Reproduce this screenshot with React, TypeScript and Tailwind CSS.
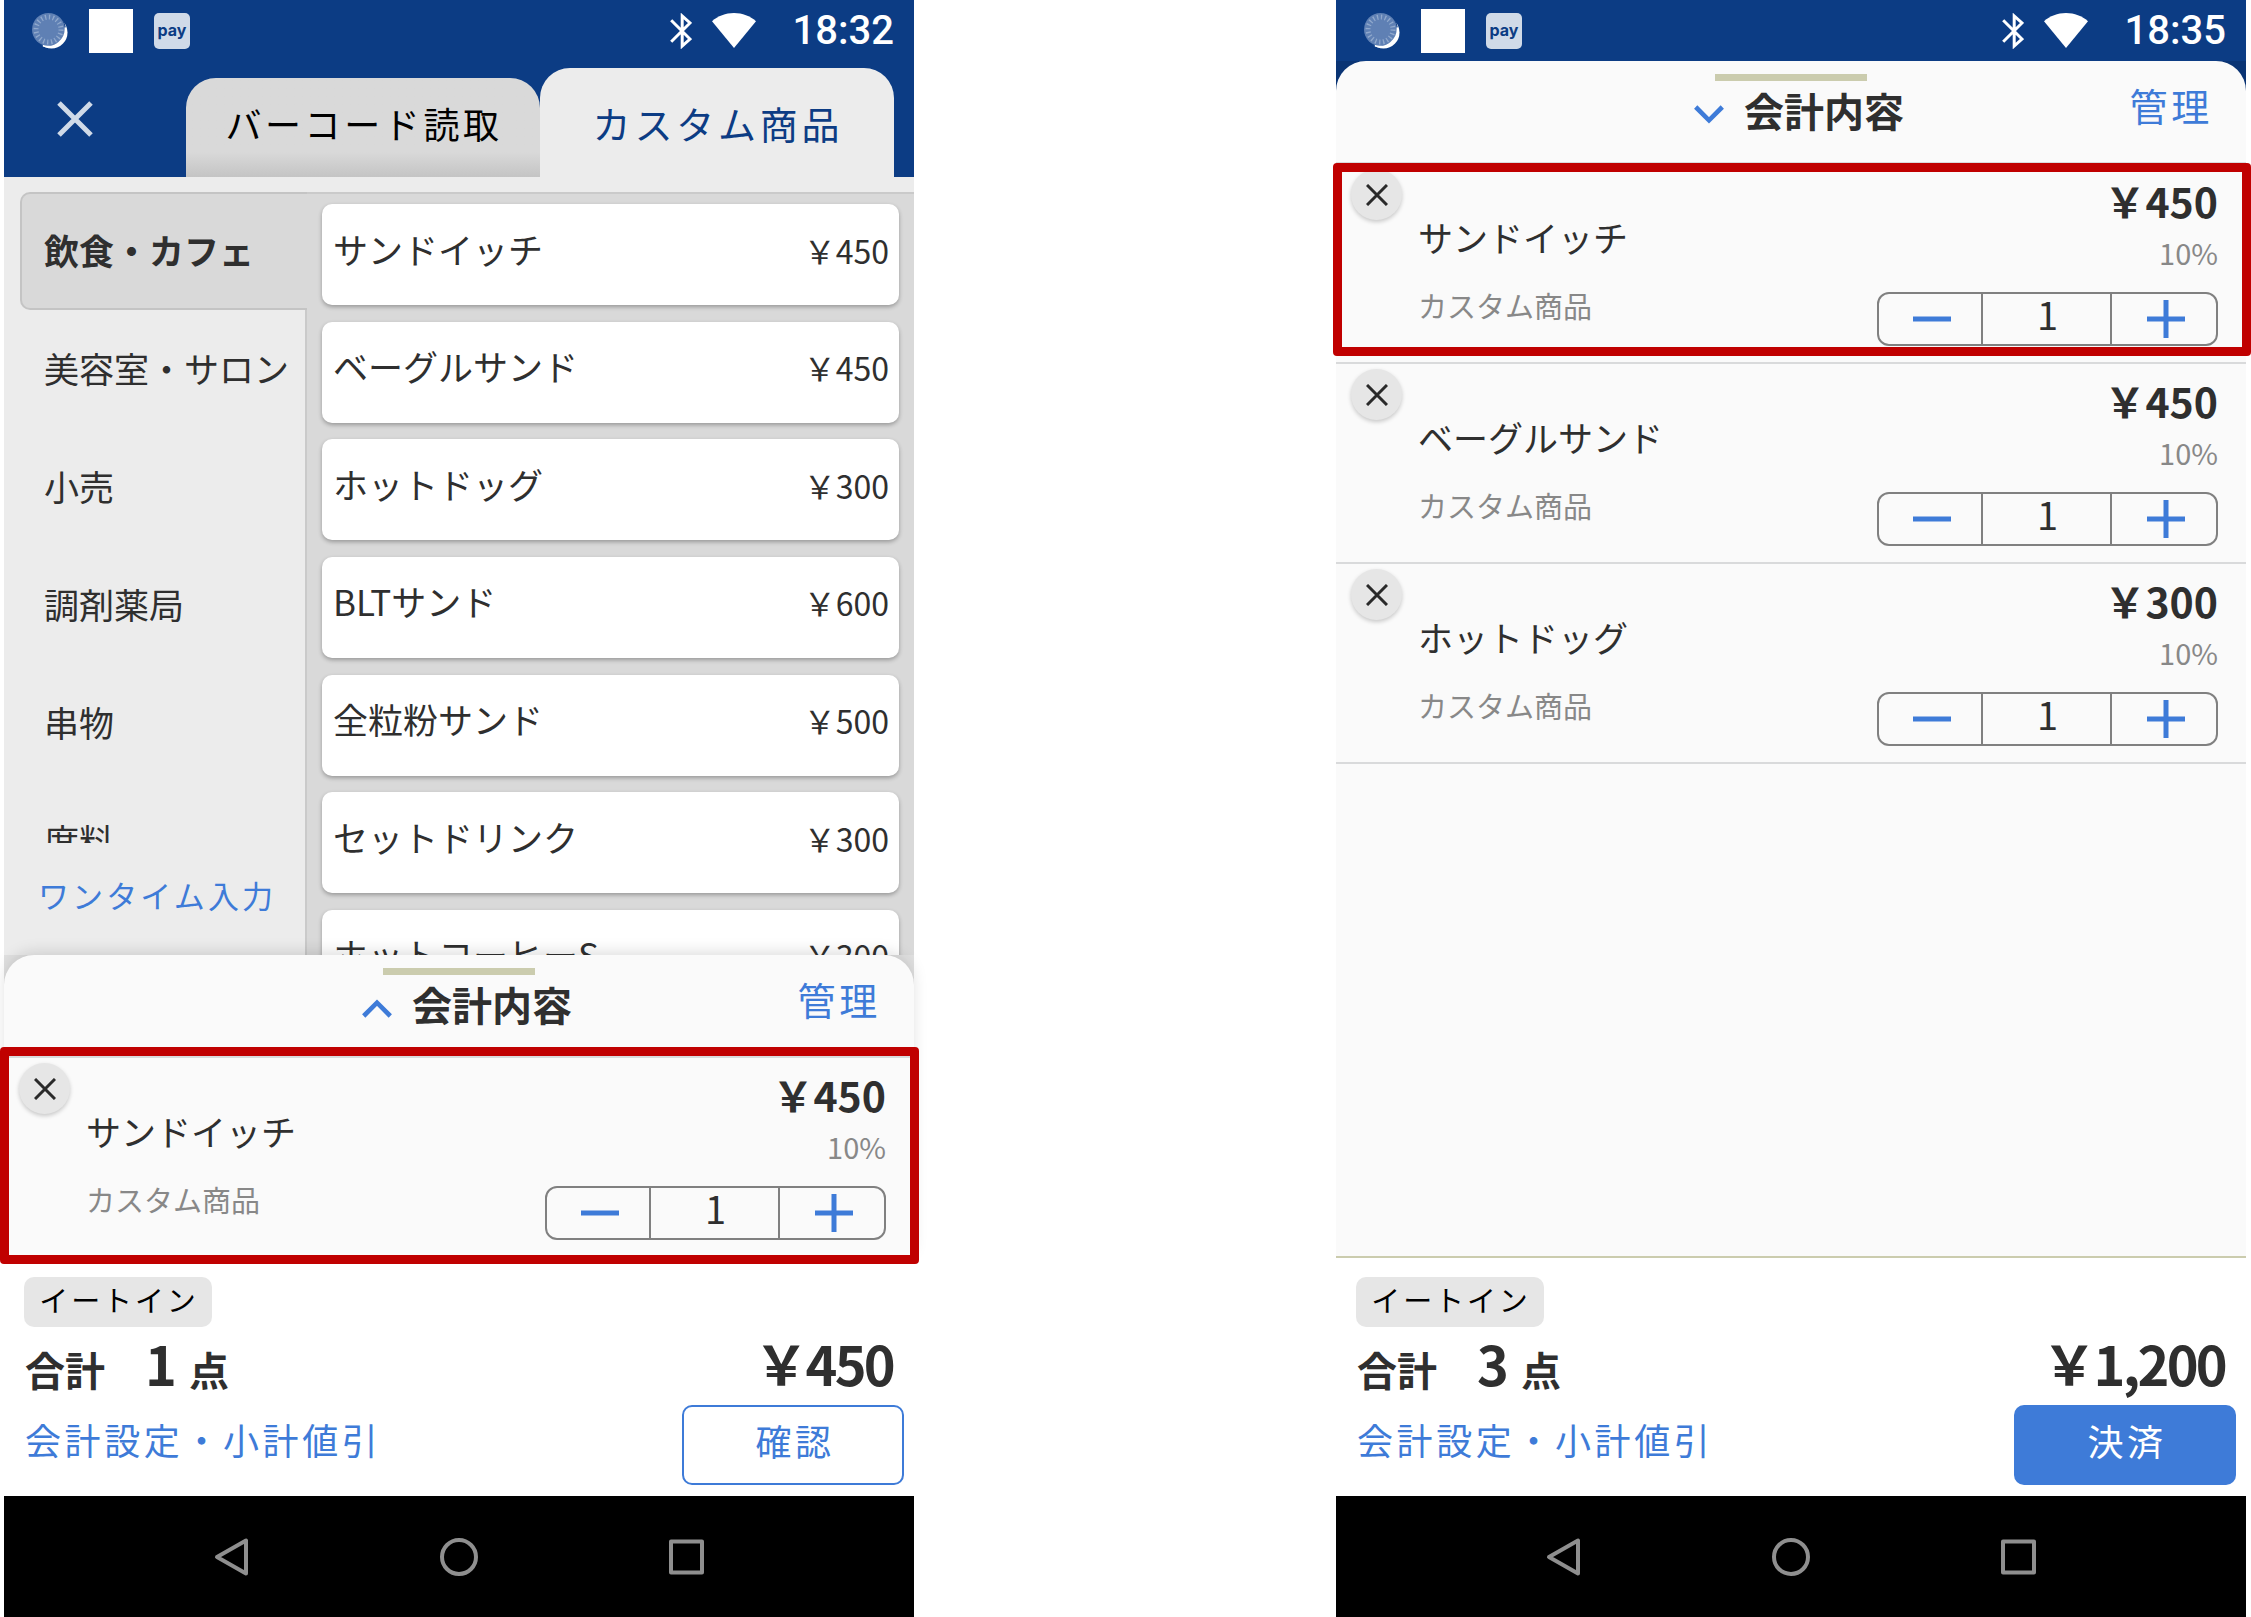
import React from "react";

type Product = { name: string; price: string };

const categories = ["飲食・カフェ", "美容室・サロン", "小売", "調剤薬局", "串物", "席料"];

const products: Product[] = [
  { name: "サンドイッチ", price: "￥450" },
  { name: "ベーグルサンド", price: "￥450" },
  { name: "ホットドッグ", price: "￥300" },
  { name: "BLTサンド", price: "￥600" },
  { name: "全粒粉サンド", price: "￥500" },
  { name: "セットドリンク", price: "￥300" },
  { name: "ホットコーヒーS", price: "￥300" },
];

function StatusBar({ time }: { time: string }) {
  return (
    <div className="flex h-[61px] shrink-0 items-center justify-between bg-[#0c3c84] pl-7 pr-5">
      <div className="flex items-center gap-[21px]">
        <svg width="36" height="36" viewBox="0 0 36 36" aria-hidden="true">
          <circle cx="19.5" cy="19.5" r="16" fill="#fff" />
          <circle cx="17" cy="17" r="17" fill="#0c3c84" />
          <circle cx="16.5" cy="16.5" r="16.5" fill="#5f80b4" />
          <path d="M33.300 14.500A16.500 16.500 0 0 1 11 32.800A17.500 17.500 0 0 0 33.300 14.500z" fill="#fff" stroke="#fff" strokeWidth="1.500" />
          <circle cx="16.5" cy="16.5" r="12.5" fill="none" stroke="#91a9cd" strokeWidth="5" strokeDasharray="1.3 2.627" />
        </svg>
        <span className="size-11 bg-white" />
        <span className="flex size-9 items-center justify-center rounded-[5px] bg-[#d0dae8] pb-0.5 font-['Inter',sans-serif] text-[16px] leading-5 font-bold text-[#0c3c84]">
          pay
        </span>
      </div>
      <div className="flex items-center">
        <svg width="22" height="36" viewBox="0 0 22 36" fill="none" stroke="#fff" strokeWidth="3" aria-hidden="true">
          <path d="M1.2 7.2 20 26 12.2 33V3L20 10 1.2 28.8" />
        </svg>
        <svg className="ml-5" width="44" height="35" viewBox="0 0 44 35" fill="#fff" aria-hidden="true">
          <path d="M22 35 0 8.2C6 3 13.500 0 22 0s16 3 22 8.200z" />
        </svg>
        <time className="ml-[37px] font-['Roboto',sans-serif] text-[40px] leading-[48px] font-medium text-white">{time}</time>
      </div>
    </div>
  );
}

function NavigationBar() {
  return (
    <div className="flex h-[121px] shrink-0 items-center justify-center gap-[187px] bg-black">
      <button type="button" aria-label="戻る">
        <svg width="40" height="40" viewBox="0 0 40 40" fill="none" stroke="#8f8f8f" strokeWidth="4" strokeLinejoin="round">
          <path d="M34 3.500v33L5 20z" />
        </svg>
      </button>
      <button type="button" aria-label="ホーム">
        <svg width="40" height="40" viewBox="0 0 40 40" fill="none" stroke="#8f8f8f" strokeWidth="4">
          <circle cx="20" cy="20" r="17" />
        </svg>
      </button>
      <button type="button" aria-label="アプリ履歴">
        <svg width="40" height="40" viewBox="0 0 40 40" fill="none" stroke="#8f8f8f" strokeWidth="4" strokeLinejoin="round">
          <rect x="5" y="4.500" width="31" height="31" />
        </svg>
      </button>
    </div>
  );
}

function SheetHeader({ expanded }: { expanded: boolean }) {
  return (
    <div className="h-[101px] pt-[13px]">
      <div className="mx-auto h-[7px] w-[152px] bg-[#cbccae]" />
      <div className="grid grid-cols-[1fr_auto_1fr] items-start">
        <span />
        <h2 className="flex items-center gap-5 pt-[5px] pl-4">
          <button type="button" aria-label={expanded ? "閉じる" : "開く"}>
            <svg className="mt-2.5" width="30" height="20" viewBox="0 0 30 20" fill="none" stroke="#3e7bd8" strokeWidth="4.600">
              <path d={expanded ? "M1.700 2 15 15.300 28.300 2" : "M1.700 17 15 3.700 28.300 17"} />
            </svg>
          </button>
          <span className="text-[40px] leading-[48px] font-bold text-[#2f2f2f]">会計内容</span>
        </h2>
        <a href="#manage" className="justify-self-end pr-[33px] text-[38px] leading-[48px] tracking-widest text-[#3e7bd8]">
          管理
        </a>
      </div>
    </div>
  );
}

function CartItem({ item, frame }: { item: Product; frame?: React.ReactNode }) {
  return (
    <li className="relative flex h-[200px] border-t-2 border-[#d9dadb] pr-7 pl-[15px]">
      <button
        type="button"
        aria-label={`${item.name}を削除`}
        className="mt-[5px] flex size-[51px] shrink-0 items-center justify-center rounded-full bg-[#e6e6e6] shadow-[0_2px_4px_rgba(0,0,0,0.2)]"
      >
        <svg width="22" height="22" viewBox="0 0 22 22" stroke="#2a2a2a" strokeWidth="3">
          <path d="M1 1l20 20M21 1 1 21" />
        </svg>
      </button>
      <div className="ml-4 flex-1 pt-[53px]">
        <p className="text-[35px] leading-[40px] text-[#2f2f2f]">{item.name}</p>
        <p className="mt-8 text-[29px] leading-[32px] text-[#888]">カスタム商品</p>
      </div>
      <div className="flex flex-col items-end pt-3">
        <p className="text-[41px] leading-[48px] font-bold text-[#2f2f2f]">{item.price}</p>
        <p className="mt-3 text-[29px] leading-[32px] text-[#888]">10%</p>
        <div className="mt-6 flex h-[54px] w-[341px] rounded-[12px] border-2 border-[#808080]">
          <button type="button" aria-label="数量を減らす" className="flex w-[104px] items-center justify-center border-r-2 border-[#808080] pl-1">
            <svg width="38" height="38" viewBox="0 0 38 38" stroke="#3e7bd8" strokeWidth="5">
              <path d="M0 19h38" />
            </svg>
          </button>
          <output className="flex flex-1 items-center justify-center pb-2.5 pl-0.5 text-[38px] leading-[40px] text-[#2f2f2f]">1</output>
          <button type="button" aria-label="数量を増やす" className="flex w-[106px] items-center justify-center border-l-2 border-[#808080] pl-1">
            <svg width="38" height="38" viewBox="0 0 38 38" stroke="#3e7bd8" strokeWidth="5">
              <path d="M0 19h38M19 0v38" />
            </svg>
          </button>
        </div>
      </div>
      {frame}
    </li>
  );
}

function Footer({ count, total, action, primary }: { count: number; total: string; action: string; primary?: boolean }) {
  return (
    <footer className="shrink-0 border-t-2 border-[#cbccae] bg-white pt-[19px] pb-[11px]">
      <div className="ml-5 flex h-[50px] w-[188px] justify-center rounded-[10px] bg-[#e6e6e6] pl-0.5 text-[29px] leading-[44px] tracking-widest text-black">
        イートイン
      </div>
      <div className="mt-2 flex h-[56px] items-baseline pr-[21px] pl-[21px] font-bold text-[#2f2f2f]">
        <span className="text-[40px] leading-[56px]">合計</span>
        <span className="ml-10 text-[54px] leading-[56px]">{count}</span>
        <span className="ml-3 text-[40px] leading-[56px]">点</span>
        <span className="ml-auto text-[54px] leading-[56px] tracking-tighter">{total}</span>
      </div>
      <div className="mt-[14px] flex items-start justify-between pr-[10px] pl-[21px]">
        <a href="#settings" className="text-[36px] leading-[68px] tracking-widest text-[#3e7bd8]">
          会計設定・小計値引
        </a>
        {primary ? (
          <button type="button" className="h-20 w-[222px] rounded-[10px] bg-[#3e7bd8] pb-2.5 pl-1 text-[36px] leading-[48px] tracking-widest text-white">
            {action}
          </button>
        ) : (
          <button type="button" className="h-20 w-[222px] rounded-[10px] border-2 border-[#3e7bd8] pb-2.5 pl-1 text-[36px] leading-[48px] tracking-widest text-[#3e7bd8]">
            {action}
          </button>
        )}
      </div>
    </footer>
  );
}

function CatalogScreen() {
  return (
    <section className="flex min-w-0 flex-1 flex-col">
      <StatusBar time="18:32" />
      <div className="flex h-[116px] shrink-0 bg-[#0c3c84] pr-5">
        <button type="button" aria-label="閉じる" className="flex w-[182px] shrink-0 items-center pl-[53px]">
          <svg width="36" height="36" viewBox="0 0 36 36" stroke="#d0dae8" strokeWidth="5">
            <path d="M2 2l32 32M34 2 2 34" />
          </svg>
        </button>
        <div role="tablist" className="flex flex-1 items-end">
          <button
            role="tab"
            aria-selected="false"
            className="h-[99px] flex-1 rounded-t-[30px] bg-linear-to-b from-[#d9d9d9] from-75% to-[#c4c4c4] pt-[17px] pb-[26px] pl-0.5 text-[36px] leading-[56px] tracking-widest text-black"
          >
            バーコード読取
          </button>
          <button
            role="tab"
            aria-selected="true"
            className="h-[109px] flex-1 rounded-t-[30px] bg-[#ececec] pt-[27px] pb-[26px] pl-0.5 text-[38px] leading-[56px] tracking-widest text-[#0c3c84]"
          >
            カスタム商品
          </button>
        </div>
      </div>
      <div className="flex min-h-0 flex-1 basis-0 bg-[#ececec] pt-[15px]">
        <nav className="flex w-[301px] shrink-0 flex-col">
          <div className="relative z-10 -mr-0.5 min-h-0 flex-1 overflow-hidden pl-4">
            <ul className="flex h-[706px] flex-col justify-between">
              {categories.map((name, i) => (
                <li key={name}>
                  <button
                    type="button"
                    className={
                      i === 0
                        ? "flex h-[118px] w-full items-center rounded-l-[10px] border-2 border-r-0 border-[#c4c4c4] bg-[#d9d9d9] pb-[3px] pl-[22px] text-[35px] leading-[40px] font-bold text-[#2f2f2f]"
                        : "flex h-[118px] w-full items-center pb-[3px] pl-6 text-[35px] leading-[40px] whitespace-nowrap text-[#2f2f2f]"
                    }
                  >
                    {name}
                  </button>
                </li>
              ))}
            </ul>
          </div>
          <a href="#onetime" className="h-[112px] shrink-0 pt-8 pl-[34px] text-[31px] leading-[40px] tracking-widest text-[#3e7bd8]">
            ワンタイム入力
          </a>
        </nav>
        <div className="flex-1 overflow-hidden border-t-2 border-l-2 border-[#cacaca] bg-[#d9d9d9] px-[15px] pt-[10px]">
          <ul className="flex h-[807px] flex-col justify-between">
            {products.map((p) => (
              <li key={p.name}>
                <button
                  type="button"
                  className="flex h-[101px] w-full items-center justify-between rounded-[10px] bg-white pr-[10px] pb-3 pl-[11px] leading-[40px] text-[#2f2f2f] shadow-[0_2px_4px_rgba(0,0,0,0.3)]"
                >
                  <span className="text-[35px]">{p.name}</span>
                  <span className="pt-0.5 text-[32px]">{p.price}</span>
                </button>
              </li>
            ))}
          </ul>
        </div>
      </div>
      <div className="shrink-0 bg-[#e0e0e0]">
        <div className="rounded-t-[30px] bg-[#fafafa] shadow-[0_-4px_16px_-2px_rgba(0,0,0,0.15)]">
          <SheetHeader expanded={false} />
          <ul>
            <CartItem
              item={products[0]}
              frame={<span className="pointer-events-none absolute -top-[11px] -right-[5px] -bottom-2 -left-1 z-10 rounded-[4px] border-[9px] border-[#c00000]" />}
            />
          </ul>
        </div>
      </div>
      <Footer count={1} total="￥450" action="確認" />
      <NavigationBar />
    </section>
  );
}

function CheckoutScreen() {
  return (
    <section className="flex min-w-0 flex-1 flex-col">
      <StatusBar time="18:35" />
      <div className="flex-1 bg-linear-to-b from-[#0a3474] from-50% to-[#fafafa] to-50%">
        <div className="h-full rounded-t-[30px] bg-[#fafafa]">
          <SheetHeader expanded />
          <ul className="border-b-2 border-[#d9dadb]">
            <CartItem
              item={products[0]}
              frame={<span className="pointer-events-none absolute -top-px -right-[5px] bottom-[6px] -left-[3px] z-10 rounded-[4px] border-[9px] border-[#c00000]" />}
            />
            <CartItem item={products[1]} />
            <CartItem item={products[2]} />
          </ul>
        </div>
      </div>
      <Footer count={3} total="￥1,200" action="決済" primary />
      <NavigationBar />
    </section>
  );
}

export default function App() {
  return (
    <main lang="ja" className="flex min-h-screen gap-[422px] bg-white pr-[5px] pl-1 font-['Noto_Sans_CJK_JP',sans-serif]">
      <CatalogScreen />
      <CheckoutScreen />
    </main>
  );
}
